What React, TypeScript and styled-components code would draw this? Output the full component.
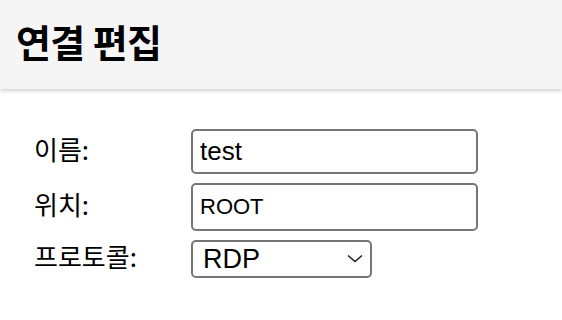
import React from 'react';
import styled, { createGlobalStyle } from 'styled-components';

const GlobalStyle = createGlobalStyle`
  html, body {
    margin: 0;
    padding: 0;
    background: #ffffff;
  }
  body {
    font-family: "Liberation Sans", "Noto Sans CJK KR", sans-serif;
    color: #000;
  }
`;

const Page = styled.div`
  width: 562px;
  height: 320px;
  overflow: hidden;
  background: #fff;
`;

const Header = styled.header`
  height: 89px;
  background: #f5f5f5;
  box-shadow: 0 2px 4px rgba(0, 0, 0, 0.18);
  display: flex;
  align-items: center;
  padding-left: 16px;
  box-sizing: border-box;
`;

const Title = styled.h1`
  margin: 0;
  font-family: "Noto Sans CJK KR", sans-serif;
  font-size: 38px;
  font-weight: 700;
  letter-spacing: -0.6px;
  margin-top: -8px;
`;

const Form = styled.form`
  display: grid;
  grid-template-columns: 157px auto;
  row-gap: 9px;
  align-items: center;
  justify-items: start;
  padding: 40px 0 0 34px;
`;

const Label = styled.label`
  font-family: "Noto Sans CJK KR", sans-serif;
  font-size: 26px;
  font-weight: 400;
  margin-top: -7px;
`;

const TextInput = styled.input<{ $size: number; $height: number }>`
  box-sizing: border-box;
  width: 287px;
  height: ${(p) => p.$height}px;
  border: 2px solid #767676;
  border-radius: 5px;
  padding: 0 7px;
  font-family: "Liberation Sans", sans-serif;
  font-size: ${(p) => p.$size}px;
  color: #000;
  background: #fff;
  outline: none;
`;

const SelectWrap = styled.div`
  position: relative;
  width: 181px;
  height: 38px;
`;

const Select = styled.select`
  box-sizing: border-box;
  width: 100%;
  height: 100%;
  appearance: none;
  border: 2px solid #767676;
  border-radius: 5px;
  padding: 0 0 0 10px;
  font-family: "Liberation Sans", sans-serif;
  font-size: 27px;
  color: #000;
  background: #fff;
  outline: none;
`;

const Chevron = styled.svg`
  position: absolute;
  right: 9px;
  top: 14px;
  pointer-events: none;
`;

export default function App() {
  return (
    <Page>
      <GlobalStyle />
      <Header>
        <Title>연결 편집</Title>
      </Header>
      <Form onSubmit={(e) => e.preventDefault()}>
        <Label htmlFor="name">이름:</Label>
        <TextInput id="name" defaultValue="test" $size={26} $height={45} />
        <Label htmlFor="location">위치:</Label>
        <TextInput id="location" defaultValue="ROOT" $size={22} $height={48} />
        <Label htmlFor="protocol">프로토콜:</Label>
        <SelectWrap>
          <Select id="protocol" defaultValue="RDP">
            <option value="RDP">RDP</option>
            <option value="VNC">VNC</option>
            <option value="SSH">SSH</option>
          </Select>
          <Chevron width="16" height="9" viewBox="0 0 16 9" fill="none">
            <path d="M1 1.5 L8 7.5 L15 1.5" stroke="#222" strokeWidth="1.6" />
          </Chevron>
        </SelectWrap>
      </Form>
    </Page>
  );
}
